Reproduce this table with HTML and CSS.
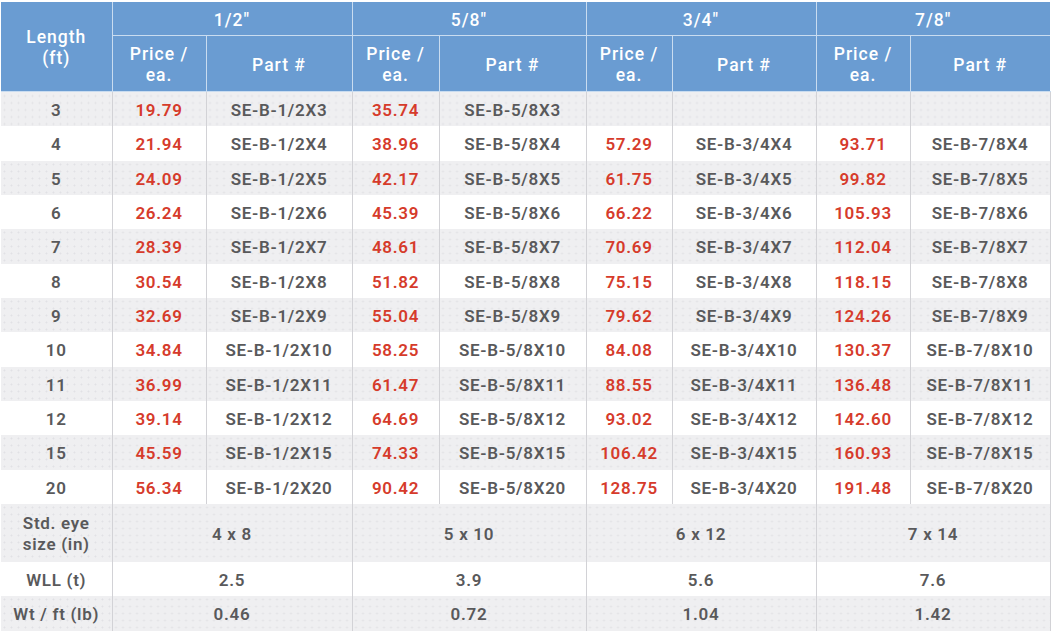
FILE: index.html
```html
<!DOCTYPE html>
<html>
<head>
<meta charset="utf-8">
<link rel="stylesheet" href="styles.css">
</head>
<body>
<table class="spec">
  <colgroup>
    <col class="c-len">
    <col class="c-p1"><col class="c-n1">
    <col class="c-p2"><col class="c-n2">
    <col class="c-p3"><col class="c-n3">
    <col class="c-p4"><col class="c-n4">
  </colgroup>
  <thead>
    <tr class="h1">
      <th rowspan="2" class="len">Length<br>(ft)</th>
      <th colspan="2">1/2"</th>
      <th colspan="2">5/8"</th>
      <th colspan="2">3/4"</th>
      <th colspan="2">7/8"</th>
    </tr>
    <tr class="h2">
      <th>Price /<br>ea.</th><th>Part #</th>
      <th>Price /<br>ea.</th><th>Part #</th>
      <th>Price /<br>ea.</th><th>Part #</th>
      <th>Price /<br>ea.</th><th>Part #</th>
    </tr>
  </thead>
  <tbody>
    <tr class="alt"><td>3</td><td class="pr">19.79</td><td>SE-B-1/2X3</td><td class="pr">35.74</td><td>SE-B-5/8X3</td><td></td><td></td><td></td><td></td></tr>
    <tr><td>4</td><td class="pr">21.94</td><td>SE-B-1/2X4</td><td class="pr">38.96</td><td>SE-B-5/8X4</td><td class="pr">57.29</td><td>SE-B-3/4X4</td><td class="pr">93.71</td><td>SE-B-7/8X4</td></tr>
    <tr class="alt"><td>5</td><td class="pr">24.09</td><td>SE-B-1/2X5</td><td class="pr">42.17</td><td>SE-B-5/8X5</td><td class="pr">61.75</td><td>SE-B-3/4X5</td><td class="pr">99.82</td><td>SE-B-7/8X5</td></tr>
    <tr><td>6</td><td class="pr">26.24</td><td>SE-B-1/2X6</td><td class="pr">45.39</td><td>SE-B-5/8X6</td><td class="pr">66.22</td><td>SE-B-3/4X6</td><td class="pr">105.93</td><td>SE-B-7/8X6</td></tr>
    <tr class="alt"><td>7</td><td class="pr">28.39</td><td>SE-B-1/2X7</td><td class="pr">48.61</td><td>SE-B-5/8X7</td><td class="pr">70.69</td><td>SE-B-3/4X7</td><td class="pr">112.04</td><td>SE-B-7/8X7</td></tr>
    <tr><td>8</td><td class="pr">30.54</td><td>SE-B-1/2X8</td><td class="pr">51.82</td><td>SE-B-5/8X8</td><td class="pr">75.15</td><td>SE-B-3/4X8</td><td class="pr">118.15</td><td>SE-B-7/8X8</td></tr>
    <tr class="alt"><td>9</td><td class="pr">32.69</td><td>SE-B-1/2X9</td><td class="pr">55.04</td><td>SE-B-5/8X9</td><td class="pr">79.62</td><td>SE-B-3/4X9</td><td class="pr">124.26</td><td>SE-B-7/8X9</td></tr>
    <tr><td>10</td><td class="pr">34.84</td><td>SE-B-1/2X10</td><td class="pr">58.25</td><td>SE-B-5/8X10</td><td class="pr">84.08</td><td>SE-B-3/4X10</td><td class="pr">130.37</td><td>SE-B-7/8X10</td></tr>
    <tr class="alt"><td>11</td><td class="pr">36.99</td><td>SE-B-1/2X11</td><td class="pr">61.47</td><td>SE-B-5/8X11</td><td class="pr">88.55</td><td>SE-B-3/4X11</td><td class="pr">136.48</td><td>SE-B-7/8X11</td></tr>
    <tr><td>12</td><td class="pr">39.14</td><td>SE-B-1/2X12</td><td class="pr">64.69</td><td>SE-B-5/8X12</td><td class="pr">93.02</td><td>SE-B-3/4X12</td><td class="pr">142.60</td><td>SE-B-7/8X12</td></tr>
    <tr class="alt"><td>15</td><td class="pr">45.59</td><td>SE-B-1/2X15</td><td class="pr">74.33</td><td>SE-B-5/8X15</td><td class="pr">106.42</td><td>SE-B-3/4X15</td><td class="pr">160.93</td><td>SE-B-7/8X15</td></tr>
    <tr><td>20</td><td class="pr">56.34</td><td>SE-B-1/2X20</td><td class="pr">90.42</td><td>SE-B-5/8X20</td><td class="pr">128.75</td><td>SE-B-3/4X20</td><td class="pr">191.48</td><td>SE-B-7/8X20</td></tr>
    <tr class="alt eye"><td>Std. eye<br>size (in)</td><td colspan="2">4 x 8</td><td colspan="2">5 x 10</td><td colspan="2">6 x 12</td><td colspan="2">7 x 14</td></tr>
    <tr class="wll"><td>WLL (t)</td><td colspan="2">2.5</td><td colspan="2">3.9</td><td colspan="2">5.6</td><td colspan="2">7.6</td></tr>
    <tr class="alt wt"><td>Wt / ft (lb)</td><td colspan="2">0.46</td><td colspan="2">0.72</td><td colspan="2">1.04</td><td colspan="2">1.42</td></tr>
  </tbody>
</table>
</body>
</html>
```
FILE: styles.css
```css
html, body {
  margin: 0;
  padding: 0;
  background: #ffffff;
}

body {
  padding: 2px 0 0 1px;
  font-family: Roboto, "Liberation Sans", Arial, sans-serif;
}

.spec {
  border-collapse: collapse;
  table-layout: fixed;
  width: 1049px;
  font-size: 17px;
  font-weight: 600;
  letter-spacing: 0.7px;
  color: #59595b;
}

.c-len { width: 111px; }
.c-p1 { width: 94px; }
.c-n1 { width: 146px; }
.c-p2 { width: 87px; }
.c-n2 { width: 147px; }
.c-p3 { width: 86px; }
.c-n3 { width: 144px; }
.c-p4 { width: 94px; }
.c-n4 { width: 140px; }

.spec th,
.spec td {
  padding: 3px 0 0 0;
  text-align: center;
  vertical-align: middle;
}

.spec th {
  background: #6a9cd2;
  color: #ffffff;
  font-size: 17.5px;
  font-weight: 500;
  letter-spacing: 1px;
  line-height: 21px;
  border: 1px solid #c9dcf0;
}

.spec thead tr:first-child th {
  border-top: none;
}

.spec thead th:first-child {
  border-left: none;
}

.spec thead th:last-child {
  border-right: none;
}

.h1 th { height: 30px; }
.h2 th { height: 52px; }

.spec td {
  border-left: 1px solid #d2d2d6;
  border-right: 1px solid #d2d2d6;
  height: 31.33px;
  line-height: 21px;
}

.spec td:first-child {
  border-left: none;
}

.spec tr.alt td {
  background-color: #efeff1;
  background-image: radial-gradient(circle, #e1e1e5 0.8px, transparent 1.2px);
  background-size: 7px 7px;
}

.spec td.pr {
  color: #d63b2b;
}

.spec tr.eye td { height: 55px; }
.spec tr.wll td { height: 31px; }
.spec tr.wt td { height: 32px; }
```
